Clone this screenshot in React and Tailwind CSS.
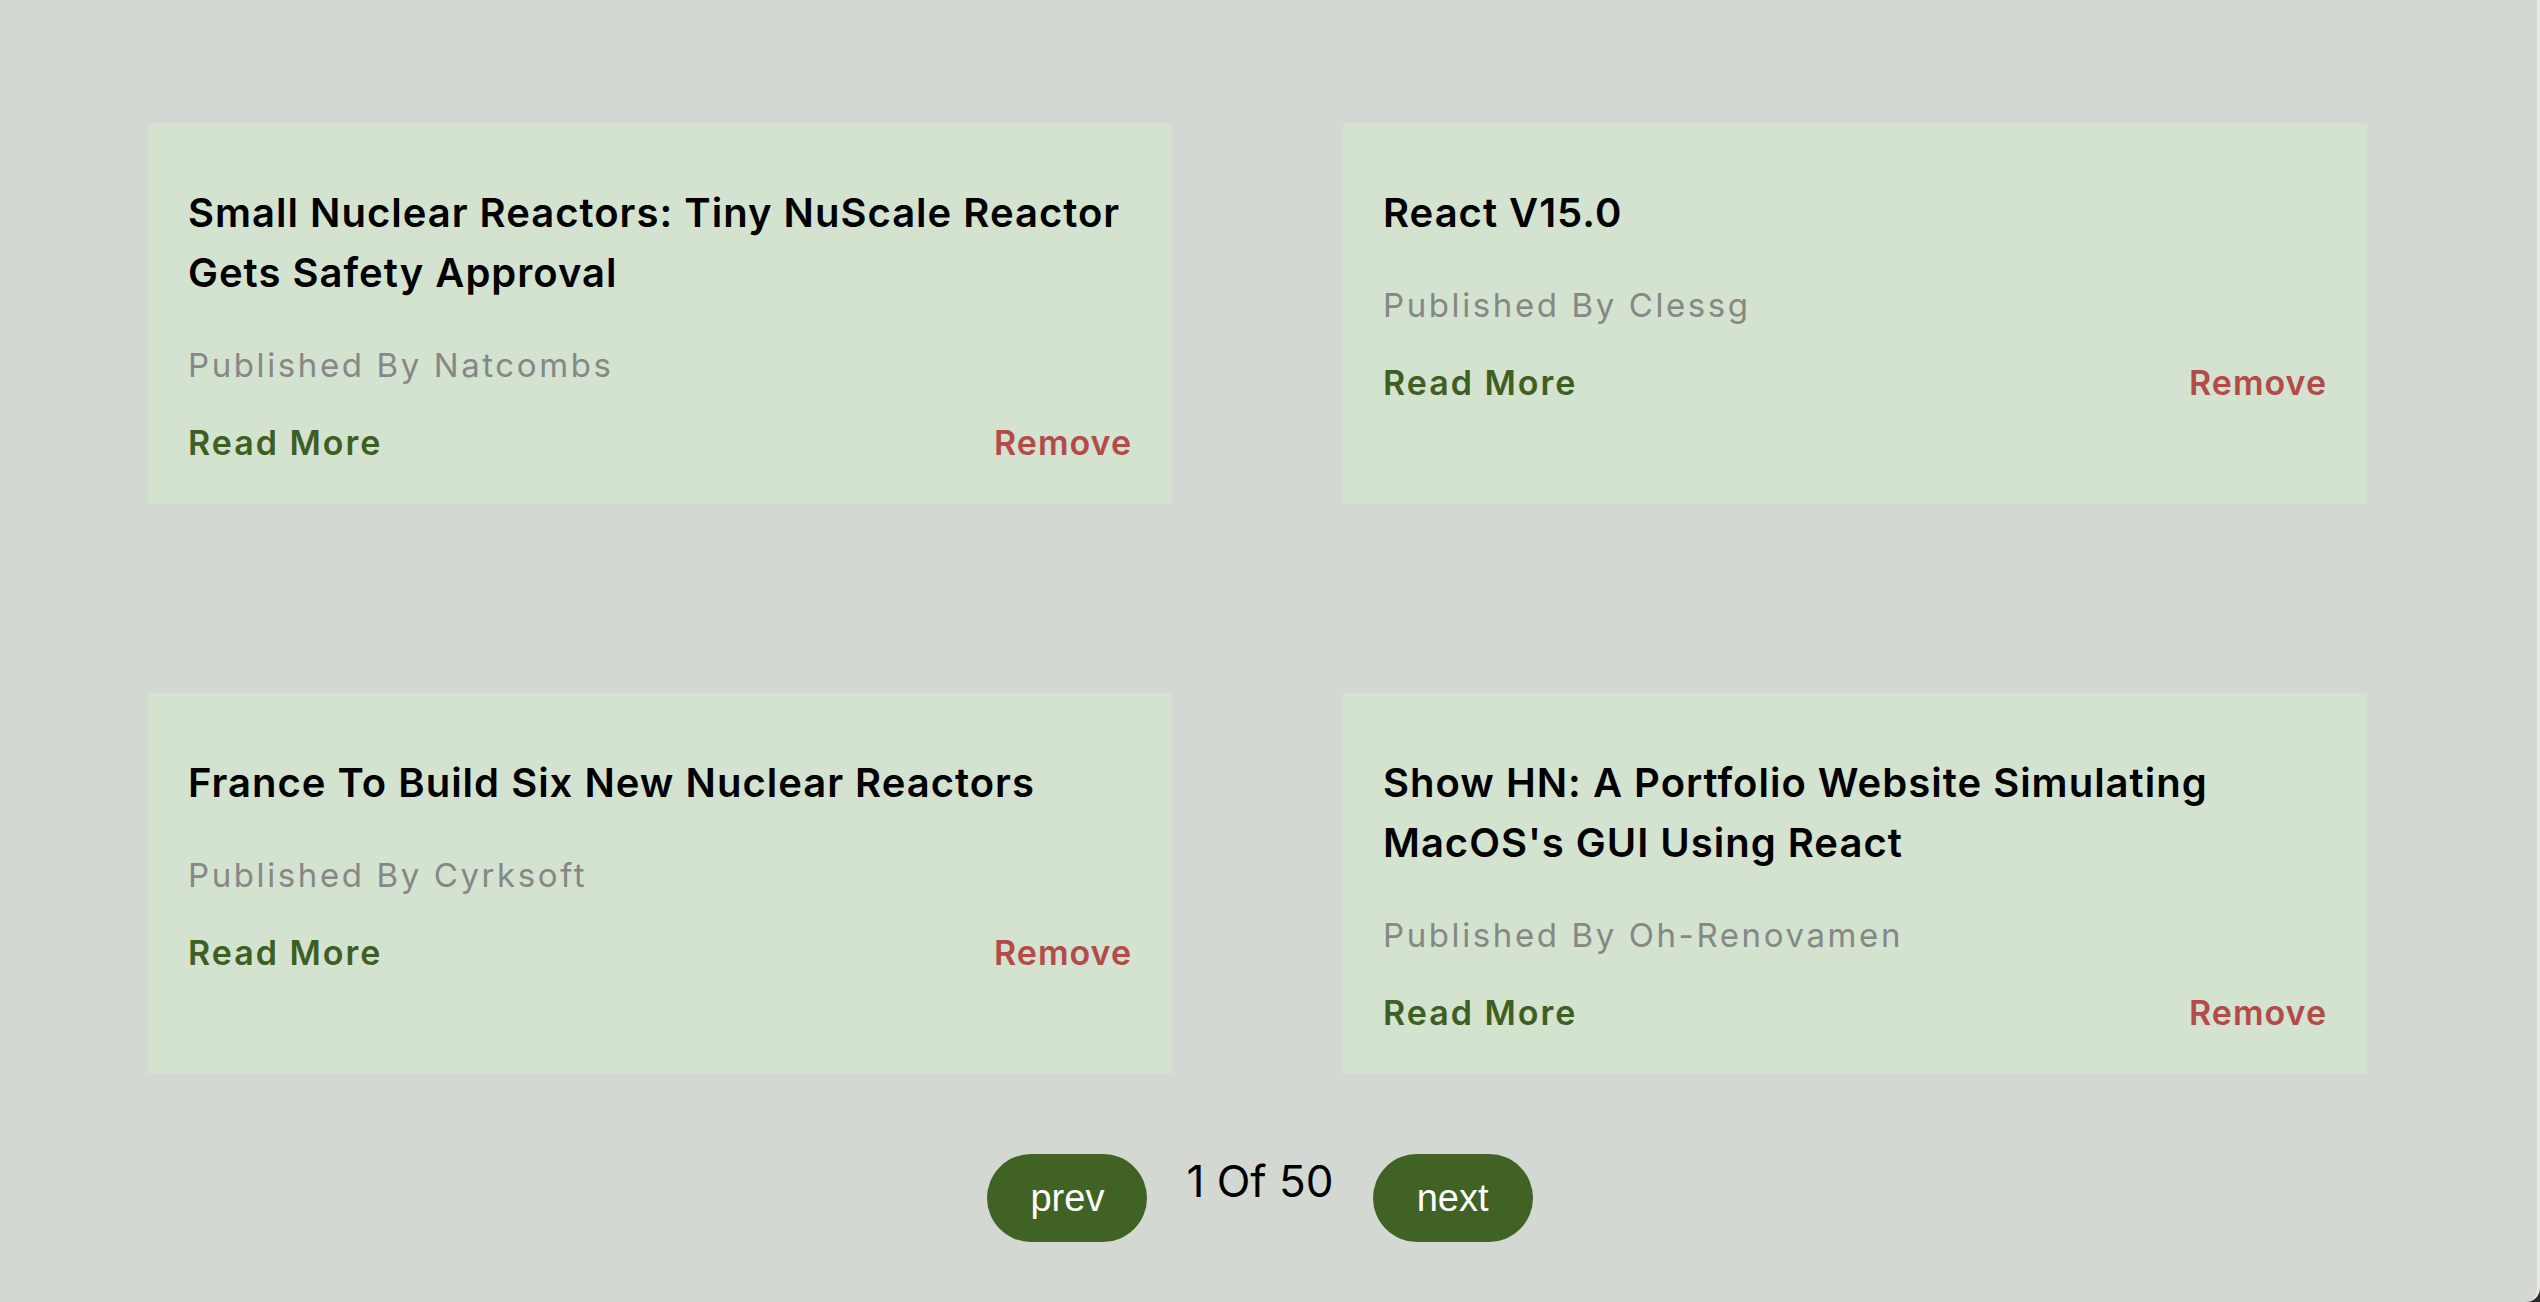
import React from "react";

const cards = [
  { title: ["Small Nuclear Reactors: Tiny NuScale Reactor", "Gets Safety Approval"], author: "Natcombs" },
  { title: ["React V15.0"], author: "Clessg" },
  { title: ["France To Build Six New Nuclear Reactors"], author: "Cyrksoft" },
  { title: ["Show HN: A Portfolio Website Simulating", "MacOS's GUI Using React"], author: "Oh-Renovamen" },
];

function Card({ title, author }) {
  return (
    <div className="bg-[#d4e2d0] h-[381px] px-10 pt-[60px] flex flex-col">
      <h2 className="text-[40px] leading-[60px] font-semibold text-black tracking-[1px]">
        {title.map((l, i) => (
          <span key={i} className="block whitespace-nowrap">{l}</span>
        ))}
      </h2>
      <p className="mt-[38px] text-[33px] leading-[48px] text-[#868886] tracking-[2.6px]">Published By {author}</p>
      <div className="mt-[30px] flex justify-between items-center text-[34px] leading-[48px] font-semibold">
        <span className="text-[#3e5f22] tracking-[2px]">Read More</span>
        <span className="text-[#b34b48] tracking-[1px]">Remove</span>
      </div>
    </div>
  );
}

export default function App() {
  return (
    <div className="w-[2540px] h-[1302px] bg-[#2b2b2b] overflow-hidden" style={{ fontFamily: "Inter, 'Noto Sans', sans-serif" }}>
      <div className="w-full h-full bg-[#d3d9d2] rounded-br-[14px] border-r-[3px] border-[#e6eae5] pt-[123px] pl-[148px]">
        <div className="grid grid-cols-[1024px_1024px] gap-x-[171px] gap-y-[189px]">
          {cards.map((c, i) => (
            <Card key={i} {...c} />
          ))}
        </div>
        <div className="mt-[80px] flex items-start justify-center w-[2224px]">
          <button className="w-[160px] h-[88px] rounded-[44px] bg-[#406224] text-white text-[38px]" style={{ fontFamily: "'Liberation Sans', Arial, sans-serif" }}>prev</button>
          <p className="mx-[39px] mt-[5px] text-[44px] leading-[44px] text-black">1 Of 50</p>
          <button className="w-[160px] h-[88px] rounded-[44px] bg-[#406224] text-white text-[38px]" style={{ fontFamily: "'Liberation Sans', Arial, sans-serif" }}>next</button>
        </div>
      </div>
    </div>
  );
}
